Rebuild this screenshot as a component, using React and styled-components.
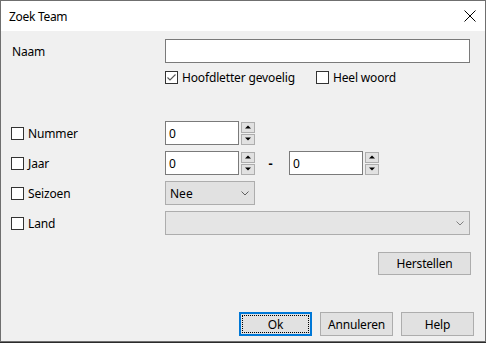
import React from 'react';
import styled, { createGlobalStyle } from 'styled-components';

const GlobalStyle = createGlobalStyle`
  body {
    margin: 0;
    background: #2b2b2b;
    font-family: "Noto Sans", "Liberation Sans", sans-serif;
    font-size: 12px;
    color: #000;
  }
`;

const Window = styled.div`
  width: 486px;
  height: 342px;
  box-sizing: border-box;
  border: 1px solid #6f6f6f;
  background: #f0f0f0;
  display: flex;
  flex-direction: column;
`;

const TitleBar = styled.div`
  height: 30px;
  background: #fff;
  display: flex;
  align-items: center;
  justify-content: space-between;
  padding: 0 9px 0 8px;
`;

const Title = styled.span`
  font-size: 12px;
  letter-spacing: -0.3px;
`;

const Body = styled.div`
  flex: 1;
  display: flex;
  flex-direction: column;
  padding: 8px 15px 5px 10px;
`;

const Row = styled.div`
  display: grid;
  grid-template-columns: 154px 1fr;
  align-items: center;
  height: ${(p) => p.h || 24}px;
  margin-top: ${(p) => p.mt || 0}px;
`;

const Label = styled.span`
  padding-left: ${(p) => p.pl || 0}px;
  letter-spacing: -0.2px;
`;

const TextInput = styled.div`
  height: 24px;
  box-sizing: border-box;
  border: 1px solid #7a7a7a;
  background: #fff;
  display: flex;
  align-items: center;
  padding-left: 3px;
  width: ${(p) => (p.w ? `${p.w}px` : 'auto')};
`;

const CheckWrap = styled.label`
  display: inline-flex;
  align-items: center;
  gap: 4px;
  margin-right: ${(p) => p.mr || 0}px;
  letter-spacing: -0.15px;
`;

const Box = styled.span`
  width: 13px;
  height: 13px;
  box-sizing: border-box;
  border: 1px solid #333;
  background: #fff;
  display: inline-flex;
  align-items: center;
  justify-content: center;
`;

const Inline = styled.div`
  display: flex;
  align-items: center;
`;

const Spin = styled.div`
  display: flex;
  align-items: center;
`;

const SpinButtons = styled.div`
  display: flex;
  flex-direction: column;
  gap: 1px;
  margin-left: 2px;
`;

const SpinBtn = styled.div`
  width: 14px;
  height: 11px;
  box-sizing: border-box;
  border: 1px solid #adadad;
  background: #e1e1e1;
  display: flex;
  align-items: center;
  justify-content: center;
`;

const Dash = styled.span`
  width: 34px;
  padding-right: 3px;
  box-sizing: border-box;
  text-align: center;
  font-weight: bold;
  font-size: 13px;
`;

const Combo = styled.div`
  height: 24px;
  box-sizing: border-box;
  border: 1px solid #adadad;
  background: ${(p) => (p.disabled ? '#e5e5e5' : '#e1e1e1')};
  display: flex;
  align-items: center;
  justify-content: space-between;
  padding: 0 5px 0 4px;
  width: ${(p) => (p.w ? `${p.w}px` : 'auto')};
`;

const ButtonRow = styled.div`
  display: flex;
  justify-content: flex-end;
  gap: 8px;
  margin-top: ${(p) => p.mt || 0}px;
  margin-right: ${(p) => p.mr || 0}px;
`;

const Button = styled.div`
  width: ${(p) => p.w || 73}px;
  height: ${(p) => p.h || 24}px;
  box-sizing: border-box;
  border: ${(p) => (p.focused ? '2px solid #0078d7' : '1px solid #adadad')};
  background: #e1e1e1;
  display: flex;
  align-items: center;
  justify-content: center;
  padding: ${(p) => (p.focused ? '1px' : '0')};
  letter-spacing: -0.2px;
`;

const FocusRing = styled.div`
  width: 100%;
  height: 100%;
  box-sizing: border-box;
  border: 1px dotted #000;
  display: flex;
  align-items: center;
  justify-content: center;
`;

const Footer = styled(ButtonRow)`
  margin-top: auto;
  margin-right: -4px;
`;

const Checkbox = ({ checked, children, mr }) => (
  <CheckWrap mr={mr}>
    <Box>
      {checked && (
        <svg width="11" height="11" viewBox="0 0 11 11">
          <path d="M1.5 5.5 L4 8 L9.5 2.5" fill="none" stroke="#555" strokeWidth="1.1" />
        </svg>
      )}
    </Box>
    {children}
  </CheckWrap>
);

const Arrow = ({ up }) => (
  <svg width="6" height="4" viewBox="0 0 6 4">
    <path d={up ? 'M0 3.5 L3 0.5 L6 3.5 Z' : 'M0 0.5 L3 3.5 L6 0.5 Z'} fill="#000" />
  </svg>
);

const Chevron = ({ color = '#606060' }) => (
  <svg width="8" height="5" viewBox="0 0 8 5">
    <path d="M0.5 0.5 L4 4 L7.5 0.5" fill="none" stroke={color} strokeWidth="1" />
  </svg>
);

const Spinner = ({ value }) => (
  <Spin>
    <TextInput w={74}>{value}</TextInput>
    <SpinButtons>
      <SpinBtn><Arrow up /></SpinBtn>
      <SpinBtn><Arrow /></SpinBtn>
    </SpinButtons>
  </Spin>
);

function App() {
  return (
    <>
      <GlobalStyle />
      <Window>
        <TitleBar>
          <Title>Zoek Team</Title>
          <svg width="12" height="12" viewBox="0 0 12 12">
            <path d="M0.5 0.5 L11.5 11.5 M11.5 0.5 L0.5 11.5" stroke="#000" strokeWidth="1" />
          </svg>
        </TitleBar>
        <Body>
          <Row>
            <Label pl={1}>Naam</Label>
            <TextInput />
          </Row>
          <Row h={13} mt={6}>
            <span />
            <Inline>
              <Checkbox checked mr={21}>Hoofdletter gevoelig</Checkbox>
              <Checkbox>Heel woord</Checkbox>
            </Inline>
          </Row>
          <Row mt={39}>
            <Checkbox>Nummer</Checkbox>
            <Spinner value="0" />
          </Row>
          <Row mt={6}>
            <Checkbox>Jaar</Checkbox>
            <Inline>
              <Spinner value="0" />
              <Dash>-</Dash>
              <Spinner value="0" />
            </Inline>
          </Row>
          <Row mt={6}>
            <Checkbox>Seizoen</Checkbox>
            <Combo w={90}>
              <span>Nee</span>
              <Chevron />
            </Combo>
          </Row>
          <Row mt={6}>
            <Checkbox>Land</Checkbox>
            <Combo disabled>
              <span />
              <Chevron color="#808080" />
            </Combo>
          </Row>
          <ButtonRow mt={17} mr={-1}>
            <Button w={93} h={23}>Herstellen</Button>
          </ButtonRow>
          <Footer>
            <Button focused>
              <FocusRing>Ok</FocusRing>
            </Button>
            <Button>Annuleren</Button>
            <Button>Help</Button>
          </Footer>
        </Body>
      </Window>
    </>
  );
}

export default App;
